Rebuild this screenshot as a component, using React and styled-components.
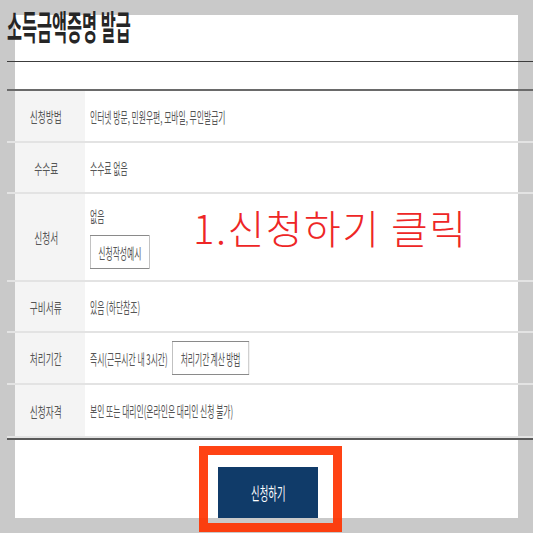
import styled, { createGlobalStyle } from 'styled-components';

const GlobalStyle = createGlobalStyle`
    html, body{
        margin: 0;
        padding: 0;
        background: #c9c9c9;
    }
    *{
        box-sizing: border-box;
    }
`

const rows = [
    { label: '신청방법', h: 50, value: '인터넷 방문, 민원우편, 모바일, 무인발급기' },
    { label: '수수료', h: 49, value: '수수료 없음' },
    { label: '신청서', h: 86, value: '없음', button: '신청작성예시', stack: true },
    { label: '구비서류', h: 49, value: '있음 (하단참조)' },
    { label: '처리기간', h: 50, value: '즉시(근무시간 내 3시간)', button: '처리기간 계산 방법' },
    { label: '신청자격', h: 51, value: '본인 또는 대리인(온라인은 대리인 신청 불가)' },
];

function App(){
    return(
        <>
            <GlobalStyle />
            <Page>
                <Panel>
                    <Title><span>소득금액증명 발급</span></Title>
                    <TopRule />
                    <Table>
                        {rows.map((row) => (
                            <Row key={row.label} h={row.h}>
                                <Label><span>{row.label}</span></Label>
                                <Value>
                                    <Squish stack={row.stack}>
                                        <span>{row.value}</span>
                                        {row.button && <SmallButton>{row.button}</SmallButton>}
                                    </Squish>
                                </Value>
                            </Row>
                        ))}
                        <Note>1.신청하기 클릭</Note>
                    </Table>
                    <Actions>
                        <ApplyWrap>
                            <ApplyButton><span>신청하기</span></ApplyButton>
                            <Highlight />
                        </ApplyWrap>
                    </Actions>
                </Panel>
            </Page>
        </>
    );
}

export default App;

const Page = styled.div`
    width: 533px;
    height: 533px;
    padding: 15px;
    background: #c9c9c9;
    overflow: hidden;
    font-family: "Noto Sans CJK KR", "Noto Sans", sans-serif;
`

const Panel = styled.div`
    height: 100%;
    background: #ffffff;
    display: flex;
    flex-direction: column;
`

const Title = styled.h1`
    margin: -6px 0 0 -8px;
    font-size: 34px;
    line-height: 34px;
    font-weight: 700;
    color: #262626;
    white-space: nowrap;
    span{
        display: inline-block;
        transform: scaleX(0.48);
        transform-origin: left center;
    }
`

const TopRule = styled.div`
    height: 2px;
    margin: 18px -15px 0 -8px;
    background: #3c3c3c;
`

const Table = styled.div`
    position: relative;
    margin: 27px -15px 0 -8px;
    border-top: 2px solid #6a6a6a;
    border-bottom: 2px solid #5a5a5a;
`

const Row = styled.div`
    display: grid;
    grid-template-columns: 78px 1fr;
    height: ${(p) => p.h + 2}px;
    border-bottom: 2px solid #e3e3e3;
    &:last-of-type{
        height: ${(p) => p.h}px;
        border-bottom: none;
    }
`

const Label = styled.div`
    display: flex;
    align-items: center;
    justify-content: center;
    background: linear-gradient(to right, transparent 8px, #f4f4f4 8px);
    font-size: 14px;
    color: #555;
    white-space: nowrap;
    span{
        display: inline-block;
        transform: scaleX(0.62);
    }
`

const Value = styled.div`
    display: flex;
    align-items: center;
    padding-left: 5px;
    font-size: 15px;
    color: #555;
`

const Squish = styled.div`
    display: flex;
    flex-direction: ${(p) => (p.stack ? 'column' : 'row')};
    align-items: ${(p) => (p.stack ? 'flex-start' : 'center')};
    gap: 9px;
    white-space: nowrap;
    transform: scaleX(0.52);
    transform-origin: left center;
`

const SmallButton = styled.button`
    height: 34px;
    padding: 0 15px;
    border: 1px solid #8a8a8a;
    background: #ffffff;
    font-family: inherit;
    font-size: 15px;
    word-spacing: -1px;
    color: #555;
`

const Note = styled.div`
    position: absolute;
    left: 186px;
    top: 116px;
    font-size: 40px;
    line-height: 40px;
    font-weight: 300;
    letter-spacing: 1.5px;
    color: #ee2626;
    white-space: nowrap;
`

const Actions = styled.div`
    display: flex;
    justify-content: center;
    margin-top: 27px;
    padding-left: 3px;
`

const ApplyWrap = styled.div`
    position: relative;
`

const ApplyButton = styled.button`
    width: 100px;
    height: 51px;
    border: none;
    background: #103b69;
    color: #ffffff;
    font-family: inherit;
    font-size: 17px;
    span{
        display: inline-block;
        transform: scaleX(0.55);
    }
`

const Highlight = styled.div`
    position: absolute;
    left: -19px;
    top: -21px;
    right: -24px;
    bottom: -14px;
    border: 9px solid rgba(255, 51, 0, 0.92);
    pointer-events: none;
`
